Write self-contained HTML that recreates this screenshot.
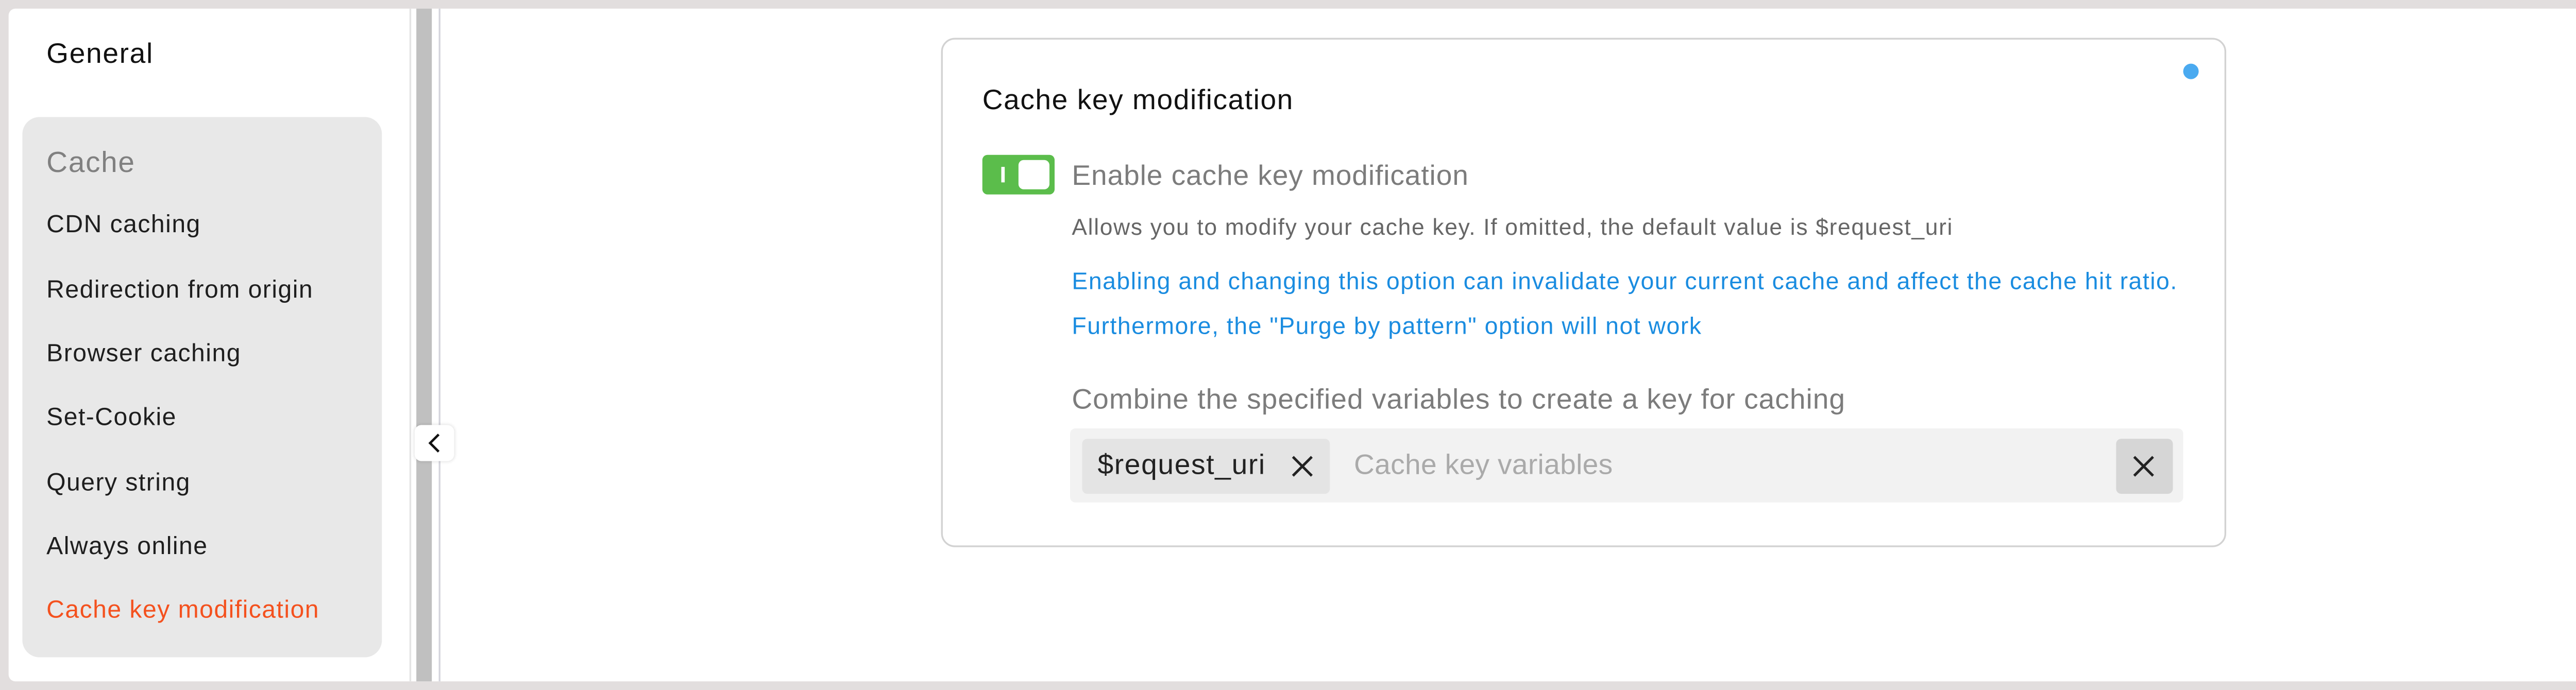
<!DOCTYPE html>
<html><head><meta charset="utf-8"><style>
html,body{margin:0;padding:0;width:5236px;height:1340px;overflow:hidden;background:#e2dede;}
#s{position:absolute;left:0;top:0;width:1568px;height:401px;transform:scale(3.3393,3.3416);transform-origin:0 0;font-family:"Liberation Sans",sans-serif;}
.a{position:absolute;white-space:nowrap;}
.frame{position:absolute;left:5px;top:5px;width:1558px;height:391px;background:#fff;border-radius:4px;}
.nav{position:absolute;left:13px;top:68px;width:209px;height:314px;background:#e8e8e8;border-radius:10px;}
.it{font-size:14.4px;color:#1e1e1e;left:27px;transform:translateY(-50%);letter-spacing:0.45px}
.card{position:absolute;left:547px;top:22px;width:745px;height:294px;border:1px solid #d2d2d2;border-radius:8px;background:#fff;}
.c{transform:translateY(-50%);}
</style></head><body><div id="s">
<div class="frame"></div>
<div class="a c" style="left:27px;top:32px;font-size:16.5px;color:#111;letter-spacing:0.5px">General</div>
<div class="nav"></div>
<div class="a c" style="left:27px;top:95px;font-size:17px;color:#808080;letter-spacing:0.5px">Cache</div>
<div class="a it" style="top:131px">CDN caching</div>
<div class="a it" style="top:169px">Redirection from origin</div>
<div class="a it" style="top:206px">Browser caching</div>
<div class="a it" style="top:243px">Set-Cookie</div>
<div class="a it" style="top:281px">Query string</div>
<div class="a it" style="top:318px">Always online</div>
<div class="a it" style="top:355px;color:#f4511e">Cache key modification</div>
<div class="a" style="left:238px;top:5px;width:1px;height:391px;background:#e4e4e4"></div>
<div class="a" style="left:242px;top:5px;width:9px;height:391px;background:#c0c0c0"></div>
<div class="a" style="left:255px;top:5px;width:1px;height:391px;background:#d4d4dc"></div>
<div class="a" style="left:241px;top:247px;width:23px;height:21px;background:#fff;border-radius:4px;box-shadow:0 0 2px rgba(0,0,0,.15)"><svg width="23" height="21"><path d="M14 5.5 L9 10.5 L14 15.5" fill="none" stroke="#111" stroke-width="1.4"/></svg></div>
<div class="card"></div>
<div class="a" style="left:1269px;top:37px;width:9px;height:9px;border-radius:50%;background:#4aaaf0"></div>
<div class="a c" style="left:571px;top:59px;font-size:16.5px;color:#111;letter-spacing:0.47px">Cache key modification</div>
<div class="a" style="left:571px;top:90px;width:42px;height:23px;background:#5bbd4b;border-radius:3px"></div>
<div class="a" style="left:582px;top:97px;width:1.5px;height:9px;background:#fff"></div>
<div class="a" style="left:592px;top:93px;width:18px;height:17px;background:#fff;border-radius:3px"></div>
<div class="a c" style="left:623px;top:103px;font-size:16.5px;color:#7c7c7c;letter-spacing:0.27px">Enable cache key modification</div>
<div class="a c" style="left:623px;top:132px;font-size:13.3px;color:#666;letter-spacing:0.5px">Allows you to modify your cache key. If omitted, the default value is $request_uri</div>
<div class="a c" style="left:623px;top:163px;font-size:13.9px;color:#1a8ce0;letter-spacing:0.45px">Enabling and changing this option can invalidate your current cache and affect the cache hit ratio.</div>
<div class="a c" style="left:623px;top:189px;font-size:13.9px;color:#1a8ce0;letter-spacing:0.45px">Furthermore, the "Purge by pattern" option will not work</div>
<div class="a c" style="left:623px;top:233px;font-size:16.5px;color:#7c7c7c;letter-spacing:0.3px">Combine the specified variables to create a key for caching</div>
<div class="a" style="left:622px;top:249px;width:647px;height:43px;background:#f2f2f2;border-radius:3px"></div>
<div class="a" style="left:629px;top:255px;width:144px;height:32px;background:#e4e4e4;border-radius:3px"></div>
<div class="a c" style="left:638px;top:271px;font-size:16.5px;color:#222;letter-spacing:0.5px">$request_uri</div>
<svg class="a" style="left:750px;top:264px" width="14" height="14"><path d="M1.5 1.5 L12.5 12.5 M12.5 1.5 L1.5 12.5" stroke="#222" stroke-width="1.5"/></svg>
<div class="a c" style="left:787px;top:271px;font-size:16.5px;color:#aaa;letter-spacing:0.1px">Cache key variables</div>
<div class="a" style="left:1230px;top:255px;width:33px;height:32px;background:#d6d6d6;border-radius:3px"></div>
<svg class="a" style="left:1239px;top:264px" width="14" height="14"><path d="M1.5 1.5 L12.5 12.5 M12.5 1.5 L1.5 12.5" stroke="#222" stroke-width="1.5"/></svg>
</div></body></html>
